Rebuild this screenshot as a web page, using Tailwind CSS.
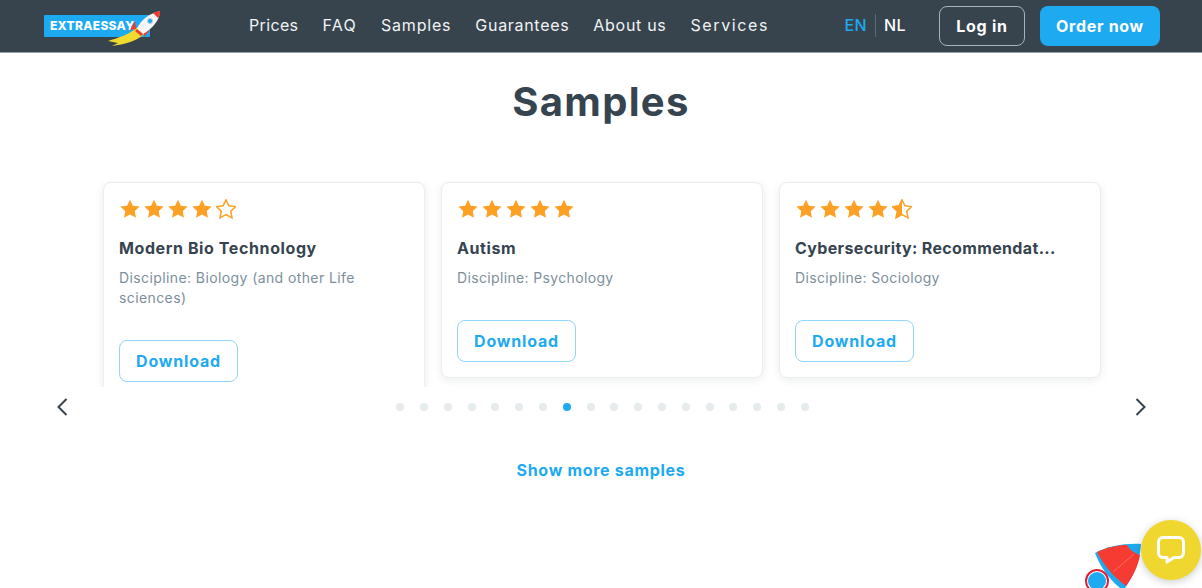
<!DOCTYPE html>
<html lang="en">
<head>
    <meta charset="UTF-8">
    <meta name="viewport" content="width=device-width, initial-scale=1.0">
    <title>Samples</title>
    <script src="https://cdn.jsdelivr.net/npm/@tailwindcss/browser@4"></script>
</head>
<body class="relative h-[588px] overflow-hidden bg-white font-['Inter',sans-serif] text-[#36444f]">
    <svg width="0" height="0" class="absolute">
        <defs>
            <polygon id="star" points="10,0.8 12.9,6.8 19.6,7.6 14.7,12.2 16,18.8 10,15.6 4,18.8 5.3,12.2 0.4,7.6 7.1,6.8"/>
            <clipPath id="half"><rect x="0" y="0" width="10" height="20"/></clipPath>
        </defs>
    </svg>

    <!-- header -->
    <header class="flex h-[53px] items-center border-b border-[#9aa3a9] bg-[#37444e] pl-[44px] pr-[42px] text-white">
        <a class="relative -mt-px block h-[22px] w-[106px] rounded-[1px] bg-[#1eaaf1] pl-[6px] text-[12px] leading-[22px] font-extrabold tracking-[0.3px]">
            EXTRAESSAY
            <svg class="absolute top-[-5px] left-[60px]" width="58" height="38" viewBox="0 0 58 38">
                <path d="M4 31 C14 28 24 25 34 17 L40 24 C32 32 20 34 8 36 L14 33 Z" fill="#f2d92e"/>
                <path d="M31 11 L26 20 L32 19 Z" fill="#f03a2e"/>
                <path d="M40 21 L40 27 L46 20 Z" fill="#f03a2e"/>
                <path d="M33 19 C36 10 46 3 56 1 C56 10 48 19 39 24 Z" fill="#f4f6f7"/>
                <path d="M49 3 C52 2 54 1 56 1 C56 3 56 6 54 8 Z" fill="#f03a2e"/>
                <circle cx="46" cy="11" r="2.6" fill="#1eaaf1" stroke="#c9d3da"/>
                <path d="M33 19 L39 24 L37 26 L31 21 Z" fill="#f03a2e"/>
            </svg>
        </a>
        <nav class="-mt-[2px] ml-[99px] flex gap-[24px] text-[16px] text-[#f1f3f4]">
            <a class="tracking-[0.35px]">Prices</a>
            <a class="tracking-[1.3px]">FAQ</a>
            <a class="tracking-[0.8px]">Samples</a>
            <a class="tracking-[0.7px]">Guarantees</a>
            <a class="tracking-[0.7px]">About us</a>
            <a class="tracking-[1.6px]">Services</a>
        </nav>
        <div class="-mt-[2px] ml-auto flex items-center text-[16px] font-medium tracking-[0.4px]">
            <span class="text-[#1eaaf1]">EN</span>
            <span class="mx-[8px] h-[23px] w-px bg-[#5d6a74]"></span>
            <span>NL</span>
        </div>
        <a class="-mt-px ml-[33px] flex h-[40px] w-[86px] items-center justify-center rounded-[8px] border-[1.5px] border-[#aab2b8] text-[16px] font-bold tracking-[0.7px]">Log in</a>
        <a class="-mt-px ml-[15px] flex h-[40px] w-[120px] items-center justify-center rounded-[8px] bg-[#1eaaf1] text-[16px] font-bold tracking-[0.7px]">Order now</a>
    </header>

    <main>
        <h1 class="mt-[24px] text-center text-[40px] leading-[50px] font-bold tracking-[1.3px] text-[#36444f]">Samples</h1>

        <!-- cards, clipped at the bottom of the carousel -->
        <div class="mt-[54px] ml-[95px] flex h-[206px] w-[1014px] items-start gap-[16px] overflow-hidden px-[8px] pt-[1px]">
            <article class="w-[322px] shrink-0 rounded-[8px] border border-[#e9eef1] bg-white px-[15px] pt-[16px] pb-[15px] shadow-[0_2px_8px_rgba(54,68,79,0.1)]">
                <div class="ml-px flex h-[20px] gap-[4px]">
                    <svg width="20" height="20" fill="#fda024"><use href="#star"/></svg>
                    <svg width="20" height="20" fill="#fda024"><use href="#star"/></svg>
                    <svg width="20" height="20" fill="#fda024"><use href="#star"/></svg>
                    <svg width="20" height="20" fill="#fda024"><use href="#star"/></svg>
                    <svg width="20" height="20" fill="none" stroke="#fda024" stroke-width="1.5"><use href="#star"/></svg>
                </div>
                <h3 class="mt-[17px] h-[24px] text-[16px] leading-[24px] font-bold tracking-[0.6px]">Modern Bio Technology</h3>
                <p class="mt-[8px] text-[14px] leading-[20px] tracking-[0.4px] text-[#7d8f9c]">Discipline: Biology (and other Life sciences)</p>
                <a class="mt-[32px] flex h-[42px] w-[119px] items-center justify-center rounded-[8px] border-[1.5px] border-[#8fd6fa] text-[16px] font-bold tracking-[0.8px] text-[#1eaaf1]">Download</a>
            </article>
            <article class="w-[322px] shrink-0 rounded-[8px] border border-[#e9eef1] bg-white px-[15px] pt-[16px] pb-[15px] shadow-[0_2px_8px_rgba(54,68,79,0.1)]">
                <div class="ml-px flex h-[20px] gap-[4px]">
                    <svg width="20" height="20" fill="#fda024"><use href="#star"/></svg>
                    <svg width="20" height="20" fill="#fda024"><use href="#star"/></svg>
                    <svg width="20" height="20" fill="#fda024"><use href="#star"/></svg>
                    <svg width="20" height="20" fill="#fda024"><use href="#star"/></svg>
                    <svg width="20" height="20" fill="#fda024"><use href="#star"/></svg>
                </div>
                <h3 class="mt-[17px] h-[24px] text-[16px] leading-[24px] font-bold tracking-[0.6px]">Autism</h3>
                <p class="mt-[8px] text-[14px] leading-[20px] tracking-[0.35px] text-[#7d8f9c]">Discipline: Psychology</p>
                <a class="mt-[32px] flex h-[42px] w-[119px] items-center justify-center rounded-[8px] border-[1.5px] border-[#8fd6fa] text-[16px] font-bold tracking-[0.8px] text-[#1eaaf1]">Download</a>
            </article>
            <article class="w-[322px] shrink-0 rounded-[8px] border border-[#e9eef1] bg-white px-[15px] pt-[16px] pb-[15px] shadow-[0_2px_8px_rgba(54,68,79,0.1)]">
                <div class="ml-px flex h-[20px] gap-[4px]">
                    <svg width="20" height="20" fill="#fda024"><use href="#star"/></svg>
                    <svg width="20" height="20" fill="#fda024"><use href="#star"/></svg>
                    <svg width="20" height="20" fill="#fda024"><use href="#star"/></svg>
                    <svg width="20" height="20" fill="#fda024"><use href="#star"/></svg>
                    <svg width="20" height="20" fill="none" stroke="#fda024" stroke-width="1.5"><use href="#star"/><use href="#star" fill="#fda024" stroke="none" clip-path="url(#half)"/></svg>
                </div>
                <h3 class="mt-[17px] h-[24px] text-[16px] leading-[24px] font-bold tracking-[0.35px]">Cybersecurity: Recommendat...</h3>
                <p class="mt-[8px] text-[14px] leading-[20px] tracking-[0.35px] text-[#7d8f9c]">Discipline: Sociology</p>
                <a class="mt-[32px] flex h-[42px] w-[119px] items-center justify-center rounded-[8px] border-[1.5px] border-[#8fd6fa] text-[16px] font-bold tracking-[0.8px] text-[#1eaaf1]">Download</a>
            </article>
        </div>

        <!-- arrows and dots -->
        <div class="mt-[10px] flex h-[20px] items-center justify-between pl-[56px] pr-[55px]">
            <svg width="12" height="20" viewBox="0 0 12 20" fill="none" stroke="#36444f" stroke-width="2"><path d="M10.500 2 L2.500 10 L10.500 18"/></svg>
            <div class="ml-[2px] flex gap-[15.8px]">
                <i class="size-[8px] rounded-full bg-[#e6ebee]"></i>
                <i class="size-[8px] rounded-full bg-[#e6ebee]"></i>
                <i class="size-[8px] rounded-full bg-[#e6ebee]"></i>
                <i class="size-[8px] rounded-full bg-[#e6ebee]"></i>
                <i class="size-[8px] rounded-full bg-[#e6ebee]"></i>
                <i class="size-[8px] rounded-full bg-[#e6ebee]"></i>
                <i class="size-[8px] rounded-full bg-[#e6ebee]"></i>
                <i class="size-[8px] rounded-full bg-[#1eaaf1]"></i>
                <i class="size-[8px] rounded-full bg-[#e6ebee]"></i>
                <i class="size-[8px] rounded-full bg-[#e6ebee]"></i>
                <i class="size-[8px] rounded-full bg-[#e6ebee]"></i>
                <i class="size-[8px] rounded-full bg-[#e6ebee]"></i>
                <i class="size-[8px] rounded-full bg-[#e6ebee]"></i>
                <i class="size-[8px] rounded-full bg-[#e6ebee]"></i>
                <i class="size-[8px] rounded-full bg-[#e6ebee]"></i>
                <i class="size-[8px] rounded-full bg-[#e6ebee]"></i>
                <i class="size-[8px] rounded-full bg-[#e6ebee]"></i>
                <i class="size-[8px] rounded-full bg-[#e6ebee]"></i>
            </div>
            <svg width="12" height="20" viewBox="0 0 12 20" fill="none" stroke="#36444f" stroke-width="2"><path d="M1.500 2 L9.500 10 L1.500 18"/></svg>
        </div>

        <p class="mt-[41px] text-center text-[16px] leading-[24px] font-bold tracking-[0.7px] text-[#1eaaf1]">Show more samples</p>
    </main>

    <!-- rocket floating in the corner -->
    <svg class="absolute top-[540px] left-[1080px]" width="64" height="48" viewBox="0 0 64 48">
        <path d="M15 13 C28 6 46 3 61 4 C60 20 54 36 45 48 L40 48 C28 38 20 26 15 13 Z" fill="#1eaaf1"/>
        <path d="M17 12 C28 7 38 5 47 5 C50 10 54 13 60 15 C58 27 52 38 46 46 C35 38 24 26 17 12 Z" fill="#f63b32"/>
        <path d="M33 32 L54 14" stroke="#ff6a60" stroke-width="1" fill="none"/>
        <circle cx="17" cy="41" r="12" fill="#e01f33"/>
        <circle cx="17" cy="41" r="10" fill="#fff"/>
        <circle cx="17" cy="41" r="9" fill="#1eaaf1"/>
    </svg>

    <!-- chat bubble -->
    <div class="absolute top-[520px] left-[1141px] flex size-[60px] items-center justify-center rounded-full bg-[#f0d72f] shadow-[0_2px_8px_rgba(0,0,0,0.2)]">
        <svg width="30" height="30" viewBox="0 0 30 30" fill="none" stroke="#fff" stroke-width="3" stroke-linejoin="round"><path d="M7 2.500 H23 C25.500 2.500 27.500 4.500 27.500 7 V18 C27.500 20.500 25.500 22.500 23 22.500 H18 L11 27 V22.500 H7 C4.500 22.500 2.500 20.500 2.500 18 V7 C2.500 4.500 4.500 2.500 7 2.500 Z"/></svg>
    </div>
</body>
</html>
